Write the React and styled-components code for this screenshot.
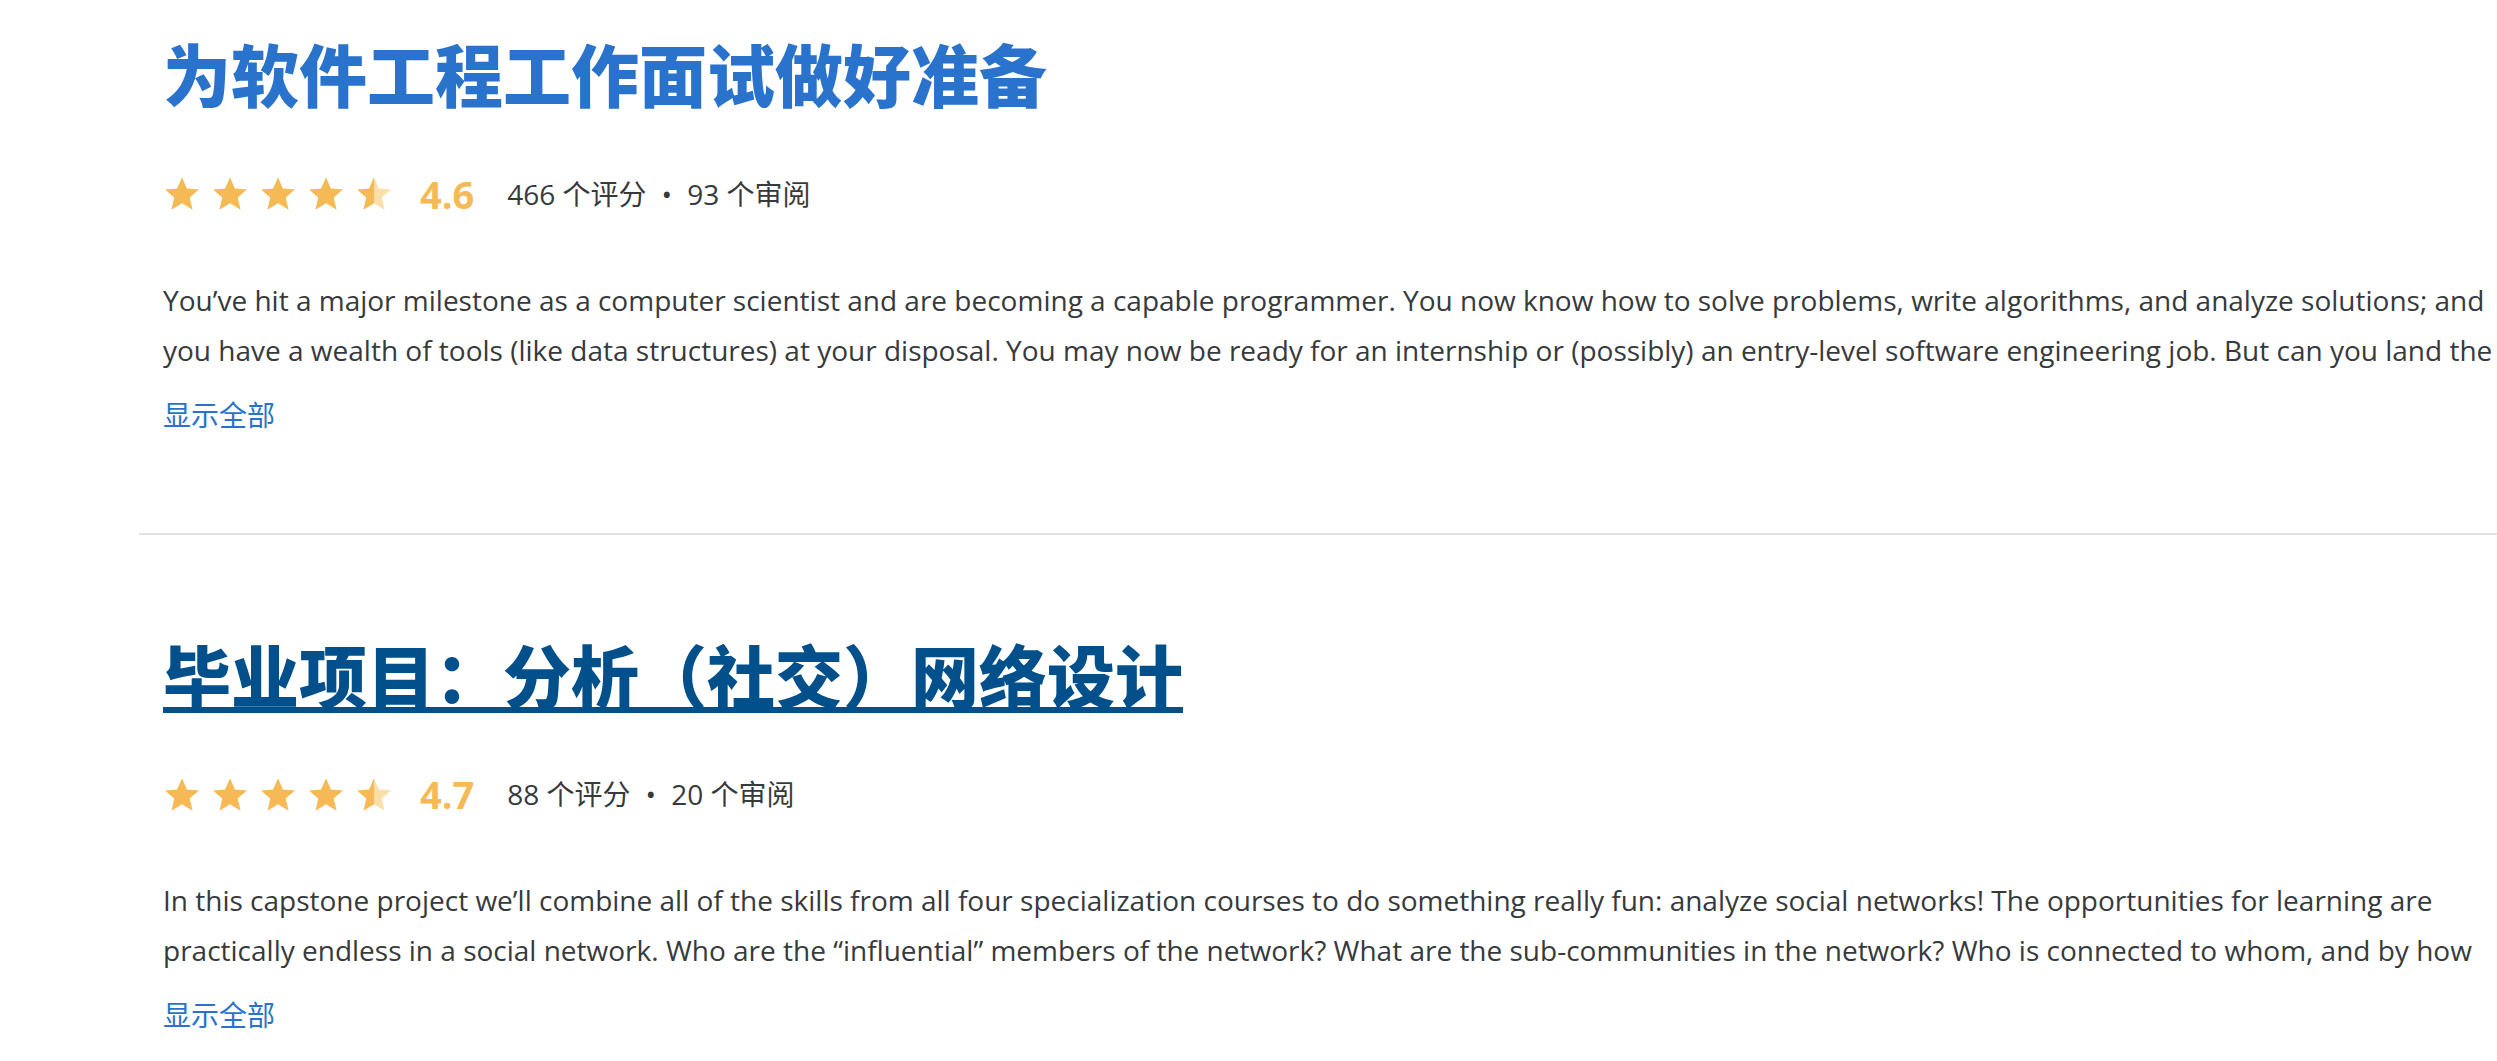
import React from "react";
import styled, { createGlobalStyle } from "styled-components";

const Global = createGlobalStyle`
  html, body { margin: 0; padding: 0; background: #ffffff; }
  body { overflow: hidden; }
  * { box-sizing: border-box; }
`;

const Page = styled.div`
  width: 100vw;
  height: 1061px;
  overflow: hidden;
  background: #ffffff;
`;

const List = styled.div`
  margin-left: 139px;
  width: 2381px;
  display: flex;
  flex-direction: column;
`;

const Card = styled.section`
  display: flex;
  flex-direction: column;
  align-items: flex-start;
  padding: ${(p) => (p.$first ? "32px" : "98px")} 0 98px 24px;
  border-bottom: 2px solid #e2e2e2;
`;

const Title = styled.a`
  font-family: "Noto Sans CJK SC", "Noto Sans", sans-serif;
  font-weight: 900;
  font-size: 68px;
  line-height: 1.2;
  color: ${(p) => (p.$hover ? "#01508b" : "#2a73cc")};
  text-decoration: ${(p) => (p.$hover ? "underline" : "none")};
  text-decoration-thickness: 6px;
  text-underline-offset: 4px;
  cursor: pointer;
`;

const RatingRow = styled.div`
  display: flex;
  align-items: center;
  height: 52px;
  margin-top: 54px;
  font-family: "Open Sans", "Noto Sans CJK SC", sans-serif;
`;

const Stars = styled.div`
  display: flex;
  align-items: center;
  gap: 10px;
`;

const StarSvg = styled.svg`
  width: 38px;
  height: 37px;
  display: block;
`;

const Score = styled.span`
  margin-left: 27px;
  font-size: 38px;
  font-weight: 700;
  color: #f5b955;
  line-height: 1;
`;

const Counts = styled.span`
  margin-left: 33px;
  font-size: 28px;
  color: #373a3c;
  line-height: 1;
  display: flex;
  align-items: center;
`;

const Dot = styled.span`
  margin: 0 15px;
`;

const Description = styled.p`
  margin: 55px 0 0;
  width: 2357px;
  font-family: "Open Sans", "Noto Sans CJK SC", sans-serif;
  font-size: 28px;
  line-height: 50px;
  color: #373a3c;
  max-height: 100px;
  overflow: hidden;
`;

const ShowAll = styled.button`
  margin-top: 18px;
  padding: 0;
  border: none;
  background: none;
  font-family: "Noto Sans CJK SC", sans-serif;
  font-size: 28px;
  line-height: 1.5;
  color: #2a73cc;
  cursor: pointer;
`;

const STAR_PATH =
  "M12 1.2l3.1 7.1 7.6.7-5.8 5.1 1.75 7.6L12 17.7 5.35 21.7 7.1 14.1 1.3 9l7.6-.7z";

function Star({ half, id }) {
  return (
    <StarSvg viewBox="0 0 24 23">
      {half && (
        <defs>
          <linearGradient id={id} x1="0" x2="1" y1="0" y2="0">
            <stop offset="50%" stopColor="#f5b955" />
            <stop offset="50%" stopColor="#fcdea8" />
          </linearGradient>
        </defs>
      )}
      <path d={STAR_PATH} fill={half ? `url(#${id})` : "#f5b955"} />
    </StarSvg>
  );
}

const courses = [
  {
    title: "为软件工程工作面试做好准备",
    score: "4.6",
    ratings: "466 个评分",
    reviews: "93 个审阅",
    text:
      "You’ve hit a major milestone as a computer scientist and are becoming a capable programmer. You now know how to solve problems, write algorithms, and analyze solutions; and you have a wealth of tools (like data structures) at your disposal. You may now be ready for an internship or (possibly) an entry-level software engineering job. But can you land the job? The interviewing process can be intimidating, and this course will help you prepare for it.",
  },
  {
    title: "毕业项目：分析（社交）网络设计",
    score: "4.7",
    ratings: "88 个评分",
    reviews: "20 个审阅",
    hover: true,
    text:
      "In this capstone project we’ll combine all of the skills from all four specialization courses to do something really fun: analyze social networks! The opportunities for learning are practically endless in a social network. Who are the “influential” members of the network? What are the sub-communities in the network? Who is connected to whom, and by how many links? These are just some of the questions you can explore in this project.",
  },
];

export default function App() {
  return (
    <Page>
      <Global />
      <List>
        {courses.map((c, i) => (
          <Card key={c.title} $first={i === 0}>
            <Title $hover={c.hover}>{c.title}</Title>
            <RatingRow>
              <Stars>
                <Star />
                <Star />
                <Star />
                <Star />
                <Star half id={`half-${i}`} />
              </Stars>
              <Score>{c.score}</Score>
              <Counts>
                {c.ratings}
                <Dot>•</Dot>
                {c.reviews}
              </Counts>
            </RatingRow>
            <Description>{c.text}</Description>
            <ShowAll>显示全部</ShowAll>
          </Card>
        ))}
      </List>
    </Page>
  );
}
